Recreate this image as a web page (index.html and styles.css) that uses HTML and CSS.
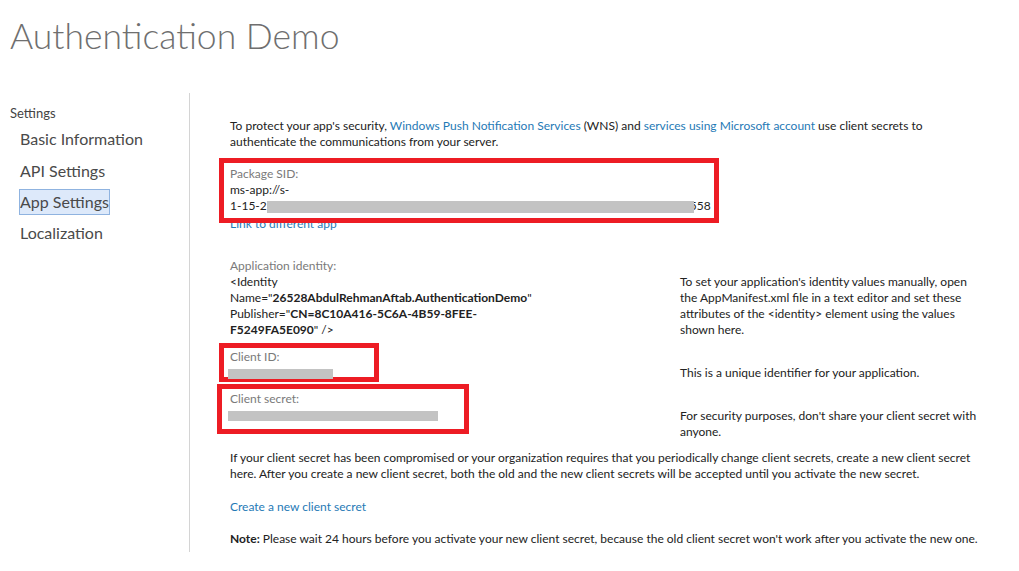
FILE: index.html
```html
<!DOCTYPE html>
<html>
<head>
<meta charset="utf-8">
<link rel="stylesheet" href="styles.css">
</head>
<body>
<header class="header"><h1 class="title">Authentication Demo</h1></header>
<div class="layout">
  <nav class="sidebar">
    <div class="side-heading">Settings</div>
    <ul class="side-list">
      <li class="side-item">Basic Information</li>
      <li class="side-item">API Settings</li>
      <li class="side-item"><span class="side-active">App Settings</span></li>
      <li class="side-item">Localization</li>
    </ul>
  </nav>
  <main class="content">
    <p class="intro">To protect your app's security, <a class="link">Windows Push Notification Services</a> (WNS) and <a class="link">services using Microsoft account</a> use client secrets to authenticate the communications from your server.</p>

    <div class="mark mark-sid">
      <div class="label">Package SID:</div>
      <div class="value">ms-app://s-</div>
      <div class="value">1-15-2<span class="blur blur-sid"></span>558</div>
    </div>
    <a class="link link-app">Link to different app</a>

    <div class="row row-identity">
      <div class="cell-left">
        <div class="label">Application identity:</div>
        <div class="value">&lt;Identity</div>
        <div class="value">Name="<b>26528AbdulRehmanAftab.AuthenticationDemo</b>"</div>
        <div class="value">Publisher="<b>CN=8C10A416-5C6A-4B59-8FEE-</b></div>
        <div class="value"><b>F5249FA5E090</b>" /&gt;</div>
      </div>
      <div class="cell-right right-identity">To set your application's identity values manually, open the AppManifest.xml file in a text editor and set these attributes of the &lt;identity&gt; element using the values shown here.</div>
    </div>

    <div class="row row-id">
      <div class="cell-left">
        <div class="mark mark-id">
          <div class="label">Client ID:</div>
          <div class="value"><span class="blur blur-id"></span></div>
        </div>
      </div>
      <div class="cell-right right-id">This is a unique identifier for your application.</div>
    </div>

    <div class="row row-secret">
      <div class="cell-left">
        <div class="mark mark-secret">
          <div class="label">Client secret:</div>
          <div class="value"><span class="blur blur-secret"></span></div>
        </div>
      </div>
      <div class="cell-right right-secret">For security purposes, don't share your client secret with anyone.</div>
    </div>

    <p class="dense para-change">If your client secret has been compromised or your organization requires that you periodically change client secrets, create a new client secret here. After you create a new client secret, both the old and the new client secrets will be accepted until you activate the new secret.</p>
    <p class="dense para-link"><a class="link">Create a new client secret</a></p>
    <p class="dense para-note"><b>Note:</b> Please wait 24 hours before you activate your new client secret, because the old client secret won't work after you activate the new one.</p>
  </main>
</div>
</body>
</html>
```
FILE: styles.css
```css
html, body {
  margin: 0;
  padding: 0;
  background: #ffffff;
}
body {
  font-family: "Lato", "Open Sans", sans-serif;
  color: #222222;
  font-size: 12px;
  line-height: 16px;
}
.header {
  padding: 14px 0 0 10px;
  height: 79px;
  box-sizing: border-box;
}
.title {
  margin: 0;
  font-family: "Lato", sans-serif;
  font-weight: 300;
  font-size: 35.5px;
  line-height: 44px;
  color: #6f6f6f;
}
.layout {
  display: flex;
  align-items: flex-start;
}
.sidebar {
  width: 189px;
  height: 447px;
  margin-top: 14px;
  border-right: 1px solid #d4d4d4;
  box-sizing: content-box;
  padding-top: 12px;
}
.side-heading {
  padding-left: 10px;
  font-size: 13px;
  line-height: 16px;
  color: #444444;
}
.side-list {
  list-style: none;
  margin: 2px 0 0 0;
  padding: 0 0 0 20px;
}
.side-item {
  font-size: 16px;
  line-height: 31px;
  color: #4a4a4a;
}
.side-item:first-child {
  line-height: 32px;
}
.side-active {
  background: #dde9fa;
  outline: 1px solid #8fb3e0;
  padding: 2px 0 3px 0;
}
.content {
  padding: 39px 0 0 40px;
  width: 770px;
}
.intro {
  margin: 0;
  width: 720px;
}
.link {
  color: #1f7ab6;
  text-decoration: none;
}
.label {
  color: #7a7a7a;
}
.value {
  white-space: nowrap;
}
.value b, .para-note b {
  font-weight: 700;
  color: #222222;
}
.mark {
  position: relative;
  z-index: 1;
  border: 5px solid #ed1c24;
  box-sizing: border-box;
  margin-left: -11px;
  padding-left: 6px;
}
.mark-sid {
  margin-top: 8px;
  width: 500px;
  height: 65px;
  padding-top: 3px;
  margin-bottom: -7px;
}
.link-app {
  display: block;
}
.blur {
  display: inline-block;
  background: #c3c3c3;
  vertical-align: middle;
}
.blur-sid {
  width: 427px;
  height: 12px;
  margin-left: 0;
  margin-right: -4px;
  position: relative;
}
.blur-id {
  width: 105px;
  height: 10px;
  margin-left: -2px;
}
.blur-secret {
  width: 210px;
  height: 10px;
  margin-left: -2px;
}
.row {
  display: flex;
}
.cell-left {
  width: 450px;
  flex: none;
}
.cell-right {
  width: 300px;
}
.row-identity {
  margin-top: 26px;
}
.right-identity {
  padding-top: 16px;
}
.row-id {
  margin-top: 5px;
}
.mark-id {
  width: 160px;
  height: 39px;
  padding-top: 1px;
}
.right-id {
  padding-top: 22px;
}
.row-secret {
  margin-top: 2px;
}
.mark-secret {
  margin-left: -13px;
  padding-left: 8px;
  width: 252px;
  height: 50px;
  padding-top: 2px;
}
.right-secret {
  padding-top: 24px;
}
.dense {
  margin: 0;
  width: 755px;
}
.para-change {
  margin-top: 10px;
}
.para-link {
  margin-top: 17px;
}
.para-note {
  margin-top: 16px;
  width: 770px;
}
```
